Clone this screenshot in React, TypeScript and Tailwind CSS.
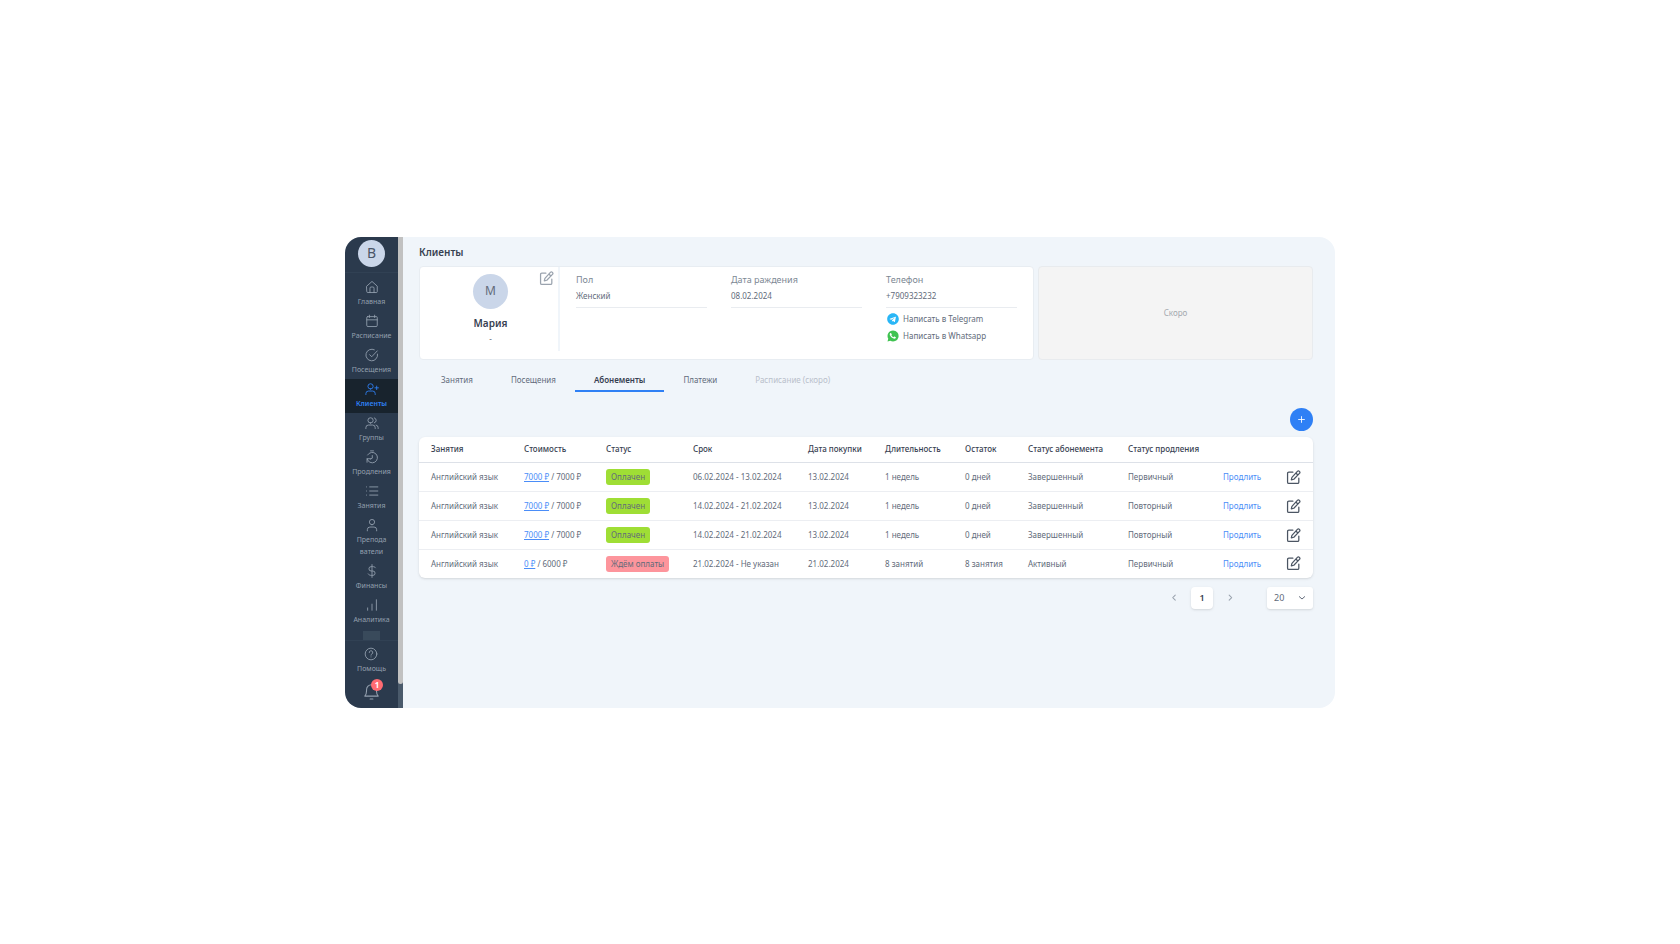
import { ReactNode } from "react";
import { FaTelegram } from "react-icons/fa";

type IconProps = { className?: string; strokeWidth?: number; children?: ReactNode };

const Icon = ({ className = "size-[14px]", strokeWidth = 1.5, children }: IconProps) => (
  <svg
    viewBox="0 0 24 24"
    className={className}
    fill="none"
    stroke="currentColor"
    strokeWidth={strokeWidth}
    strokeLinecap="round"
    strokeLinejoin="round"
  >
    {children}
  </svg>
);

const EditIcon = ({ className, strokeWidth = 2 }: IconProps) => (
  <Icon className={className} strokeWidth={strokeWidth}>
    <path d="M11 3.500H4.500a2 2 0 0 0-2 2v14a2 2 0 0 0 2 2h14a2 2 0 0 0 2-2V13" />
    <path d="M18.200 2.300a2.200 2.200 0 0 1 3.300 3.200L12.500 14.800 8.500 15.800l1-4zM15.800 4.800l3.200 3.200" />
  </Icon>
);

const WhatsappIcon = () => (
  <svg viewBox="0 0 24 24" className="size-3">
    <path fill="#40c351" d="M12 1a11 11 0 0 0-9.500 16.500L1 23l5.600-1.500A11 11 0 1 0 12 1z" />
    <path
      fill="#fff"
      d="M8.300 6.300c-.4-.8-1.300-.6-1.900 0-1.400 1.500-1 3.500.2 5.400 1.600 2.600 3.700 4.500 6.600 5.500 1.800.6 3.600.3 4.300-1.200.4-.9.3-1.400 0-1.600l-2.400-1.200c-.9-.4-1.400 1.600-2.100 1.400-2-.8-3.300-2-4.200-3.700-.3-.7 1.200-1.200.9-2z"
    />
  </svg>
);

type NavItem = { label: string; icon: ReactNode; active?: boolean };

const nav: NavItem[] = [
  {
    label: "Главная",
    icon: <path d="M3 10.500 12 2.500l9 8V20a1.500 1.500 0 0 1-1.500 1.500h-15A1.500 1.500 0 0 1 3 20zM8.500 21.500V14a2 2 0 0 1 2-2h3a2 2 0 0 1 2 2v7.500" />,
  },
  {
    label: "Расписание",
    icon: <path d="M4.500 4.500h15A1.500 1.500 0 0 1 21 6v13.500a2 2 0 0 1-2 2H5a2 2 0 0 1-2-2V6a1.500 1.500 0 0 1 1.500-1.500zM3 10h18M7.500 2v4M16.500 2v4" />,
  },
  {
    label: "Посещения",
    icon: <path d="M21.500 10.500A10 10 0 1 1 16 3M8 11.500l3.500 3.500L21 5" />,
  },
  {
    label: "Клиенты",
    icon: <path d="M9.500 12a4.500 4.500 0 1 0 0-9 4.500 4.500 0 0 0 0 9zM1.500 21.500v-1.500a4.500 4.500 0 0 1 4.500-4.500h7a4.500 4.500 0 0 1 4.500 4.500v1.500M20 7v6M17 10h6" />,
    active: true,
  },
  {
    label: "Группы",
    icon: <path d="M9.500 12a4.500 4.500 0 1 0 0-9 4.500 4.500 0 0 0 0 9zM1.500 21.500v-1.500a4.500 4.500 0 0 1 4.500-4.500h7a4.500 4.500 0 0 1 4.500 4.500v1.500M16 3.200a4.500 4.500 0 0 1 0 8.600M19 15.500a4.500 4.500 0 0 1 3.500 4.500v1.500" />,
  },
  {
    label: "Продления",
    icon: <path d="M9.500 1.500h5M4.500 8.500a9 9 0 1 1-1 6.500M3.500 21v-6h6M12.500 9.500v4.500l-3 1.500" />,
  },
  {
    label: "Занятия",
    icon: <path d="M8 5h14M8 12h14M8 19h14M2.500 5h.1M2.500 12h.1M2.500 19h.1" />,
  },
  {
    label: "Преподаватели",
    icon: <path d="M12 11.500a4.500 4.500 0 1 0 0-9 4.500 4.500 0 0 0 0 9zM4 22v-2a4.500 4.500 0 0 1 4.500-4.500h7A4.500 4.500 0 0 1 20 20v2" />,
  },
  {
    label: "Финансы",
    icon: <path d="M12 1v22M18 6.500C17 5 15.500 4.500 13 4.500h-2.500a3.700 3.700 0 0 0 0 7.500h3a3.700 3.700 0 0 1 0 7.500H11c-2.500 0-4.500-.8-5.500-2.500" />,
  },
  {
    label: "Аналитика",
    icon: <path d="M4.500 21v-4M12 21V10.500M19.500 21V3" />,
  },
];

const tabs = [
  { label: "Занятия" },
  { label: "Посещения" },
  { label: "Абонементы", active: true },
  { label: "Платежи" },
  { label: "Расписание (скоро)", disabled: true },
];

const columns = [
  { title: "Занятия", width: "w-[93px]" },
  { title: "Стоимость", width: "w-[82px]" },
  { title: "Статус", width: "w-[87px]" },
  { title: "Срок", width: "w-[115px]" },
  { title: "Дата покупки", width: "w-[77px]" },
  { title: "Длительность", width: "w-[80px]" },
  { title: "Остаток", width: "w-[63px]" },
  { title: "Статус абонемента", width: "w-[100px]" },
  { title: "Статус продления", width: "w-[95px]" },
  { title: "", width: "w-[64px]" },
  { title: "", width: "w-[38px]" },
];

const rows = [
  { paid: "7000 ₽", price: "7000 ₽", done: true, term: "06.02.2024 - 13.02.2024", bought: "13.02.2024", length: "1 недель", left: "0 дней", status: "Завершенный", renewal: "Первичный" },
  { paid: "7000 ₽", price: "7000 ₽", done: true, term: "14.02.2024 - 21.02.2024", bought: "13.02.2024", length: "1 недель", left: "0 дней", status: "Завершенный", renewal: "Повторный" },
  { paid: "7000 ₽", price: "7000 ₽", done: true, term: "14.02.2024 - 21.02.2024", bought: "13.02.2024", length: "1 недель", left: "0 дней", status: "Завершенный", renewal: "Повторный" },
  { paid: "0 ₽", price: "6000 ₽", done: false, term: "21.02.2024 - Не указан", bought: "21.02.2024", length: "8 занятий", left: "8 занятия", status: "Активный", renewal: "Первичный" },
];

function Sidebar() {
  return (
    <aside className="flex w-[53px] shrink-0 flex-col bg-[#2b3a4d] text-[#94a0af]">
      <div className="flex h-9 shrink-0 justify-center border-b border-[#314154] pt-[3px]">
        <div className="flex size-[27px] items-center justify-center rounded-full bg-[#cad6e9] text-sm text-[#4b5567]">B</div>
      </div>
      <nav className="flex flex-col pt-1">
        {nav.map((item) => (
          <a
            key={item.label}
            href="#"
            className={`flex flex-col items-center gap-0.5 py-[3px] ${item.active ? "bg-[#18232d] text-[#2f80f5]" : ""}`}
          >
            <Icon>{item.icon}</Icon>
            <span className={`text-center text-[7px] leading-3 ${item.active ? "font-semibold" : ""}`}>
              {item.label === "Преподаватели" ? <>Препода<br />ватели</> : item.label}
            </span>
          </a>
        ))}
      </nav>
      <div className="mx-auto mt-0.5 h-[9px] w-[17px] bg-[#394a5b]" />
      <div className="flex flex-1 flex-col items-center border-t border-[#314154] pt-1.5 pb-2">
        <a href="#" className="flex flex-col items-center gap-0.5">
          <Icon>
            <circle cx="12" cy="12" r="10" />
            <path d="M9 9.500a3 3 0 1 1 4.500 2.500c-1 .6-1.500 1-1.500 2M12 17h.1" />
          </Icon>
          <span className="text-[7px] leading-3">Помощь</span>
        </a>
        <button type="button" aria-label="Уведомления" className="relative mt-2">
          <Icon className="size-[17px]">
            <path d="M2.500 18.500h19c-2-2-2.500-4-2.500-7.500V9.500a7 7 0 0 0-14 0V11c0 3.500-.5 5.500-2.500 7.500zM10 22.500h4" />
          </Icon>
          <span className="absolute -top-1 -right-[3px] flex size-3 items-center justify-center rounded-full bg-[#ff6b72] text-[8px] font-bold text-white">
            1
          </span>
        </button>
      </div>
    </aside>
  );
}

function Field({ label, value, children }: { label: string; value: string; children?: ReactNode }) {
  return (
    <div className="flex-1">
      <div className="text-[9px] leading-4 text-[#7d8894]">{label}</div>
      <div className="border-b border-[#e9ecf0] pb-[3px] text-[8px] leading-4">{value}</div>
      {children}
    </div>
  );
}

function ClientCard() {
  return (
    <section className="flex h-[94px] w-[615px] rounded-[4px] border border-[#e8edf2] bg-white">
      <div className="relative mb-2 flex w-[140px] shrink-0 flex-col items-center border-r-2 border-[#f0f5fa] pt-[7px] pl-[3px]">
        <div className="flex size-[35px] items-center justify-center rounded-full bg-[#cad6e9] text-xs">M</div>
        <h2 className="mt-1.5 text-[10px] leading-4 font-semibold text-[#374151]">Мария</h2>
        <div className="text-[8px] leading-4">-</div>
        <button type="button" aria-label="Редактировать клиента" className="absolute top-1 right-1 text-[#9aa3ae]">
          <EditIcon className="size-[15px]" />
        </button>
      </div>
      <div className="flex flex-1 gap-6 px-4 pt-[5px]">
        <Field label="Пол" value="Женский" />
        <Field label="Дата раждения" value="08.02.2024" />
        <Field label="Телефон" value="+7909323232">
          <div className="flex flex-col pt-[3px] pl-px text-[8px]">
            <a href="#" className="flex h-[17px] items-center gap-1">
              <FaTelegram className="size-3 text-[#29b6f6]" />
              Написать в Telegram
            </a>
            <a href="#" className="flex h-[17px] items-center gap-1">
              <WhatsappIcon />
              Написать в Whatsapp
            </a>
          </div>
        </Field>
      </div>
    </section>
  );
}

function SubscriptionTable() {
  return (
    <div className="overflow-hidden rounded-md bg-white shadow-sm">
      <table className="w-full table-fixed border-collapse text-left text-[8px] whitespace-nowrap">
        <colgroup>
          {columns.map((c, i) => (
            <col key={i} className={c.width} />
          ))}
        </colgroup>
        <thead>
          <tr className="h-[26px] border-b border-[#dde1e8] text-[#374151]">
            {columns.map((c, i) => (
              <th key={i} className="pl-3 font-medium">{c.title}</th>
            ))}
          </tr>
        </thead>
        <tbody>
          {rows.map((r, i) => (
            <tr key={i} className="h-[29px] border-b border-[#eceef2] last:h-7 last:border-0">
              <td className="pl-3">Английский язык</td>
              <td className="pl-3">
                <a href="#" className="text-[#4a8df8] underline">{r.paid}</a> / {r.price}
              </td>
              <td className="pl-3">
                <span className={`inline-block rounded-[3px] px-[5px] leading-4 ${r.done ? "bg-[#9fde35]" : "bg-[#fd959c]"}`}>
                  {r.done ? "Оплачен" : "Ждём оплаты"}
                </span>
              </td>
              <td className="pl-3">{r.term}</td>
              <td className="pl-3">{r.bought}</td>
              <td className="pl-3">{r.length}</td>
              <td className="pl-3">{r.left}</td>
              <td className="pl-3">{r.status}</td>
              <td className="pl-3">{r.renewal}</td>
              <td className="pl-3">
                <button type="button" className="text-[#4a8df8]">Продлить</button>
              </td>
              <td className="pl-[11px]">
                <button type="button" aria-label="Редактировать" className="block text-[#4b5563]">
                  <EditIcon className="size-[15px]" />
                </button>
              </td>
            </tr>
          ))}
        </tbody>
      </table>
    </div>
  );
}

function Pagination() {
  return (
    <div className="mt-[9px] flex items-center justify-end text-[9px]">
      <button type="button" aria-label="Назад" className="text-[#9aa3ae]">
        <Icon className="size-[10px]" strokeWidth={2.5}>
          <path d="m15 5-6 6 6 6" />
        </Icon>
      </button>
      <button type="button" className="mx-3 size-[22px] rounded-[4px] bg-white font-semibold text-[#374151] shadow-sm">1</button>
      <button type="button" aria-label="Вперёд" className="text-[#9aa3ae]">
        <Icon className="size-[10px]" strokeWidth={2.5}>
          <path d="m10 5 6 6-6 6" />
        </Icon>
      </button>
      <div className="relative ml-8">
        <select aria-label="Строк на странице" className="h-[22px] w-[46px] appearance-none rounded-[3px] bg-white pl-[7px] shadow-sm">
          <option>20</option>
          <option>50</option>
        </select>
        <Icon className="pointer-events-none absolute top-[7px] right-[7px] size-2" strokeWidth={3}>
          <path d="m4 8 8 7 8-7" />
        </Icon>
      </div>
    </div>
  );
}

export default function App() {
  return (
    <div className="flex min-h-screen items-center justify-center bg-white font-['Noto_Sans','Open_Sans',sans-serif] text-[#626b7a]">
      <div className="flex w-full max-w-[990px] overflow-hidden rounded-2xl bg-[#f0f5fa]">
        <Sidebar />
        <div className="w-[5px] shrink-0 bg-[#4a5a6b] pb-6">
          <div className="h-full rounded-b-sm bg-[#c1c1c1]" />
        </div>
        <main className="min-w-0 flex-1 pr-[22px] pl-4">
          <h1 className="pt-[7px] pb-1.5 text-[10px] leading-4 font-semibold text-[#374151]">Клиенты</h1>
          <div className="flex gap-1">
            <ClientCard />
            <section className="flex flex-1 items-center justify-center rounded-[4px] border border-[#e8ebee] bg-[#f4f4f4] text-[8px] text-[#a3a8ae]">
              Скоро
            </section>
          </div>
          <div role="tablist" className="mt-3 flex pl-[3px]">
            {tabs.map((t) => (
              <button
                key={t.label}
                type="button"
                role="tab"
                aria-selected={!!t.active}
                disabled={t.disabled}
                className={`border-b-2 px-[19px] pb-0.5 text-[8px] leading-4 ${
                  t.active ? "border-[#2f80f5] font-semibold text-[#374151]" : "border-transparent"
                } ${t.disabled ? "text-[#b9c0ca]" : ""}`}
              >
                {t.label}
              </button>
            ))}
          </div>
          <div className="mt-4 mb-1.5 flex justify-end">
            <button
              type="button"
              aria-label="Добавить"
              className="flex size-[23px] items-center justify-center rounded-full bg-[#2f80f5] text-white"
            >
              <Icon className="size-[7px]" strokeWidth={3}>
                <path d="M12 2v20M2 12h20" />
              </Icon>
            </button>
          </div>
          <SubscriptionTable />
          <Pagination />
        </main>
      </div>
    </div>
  );
}
